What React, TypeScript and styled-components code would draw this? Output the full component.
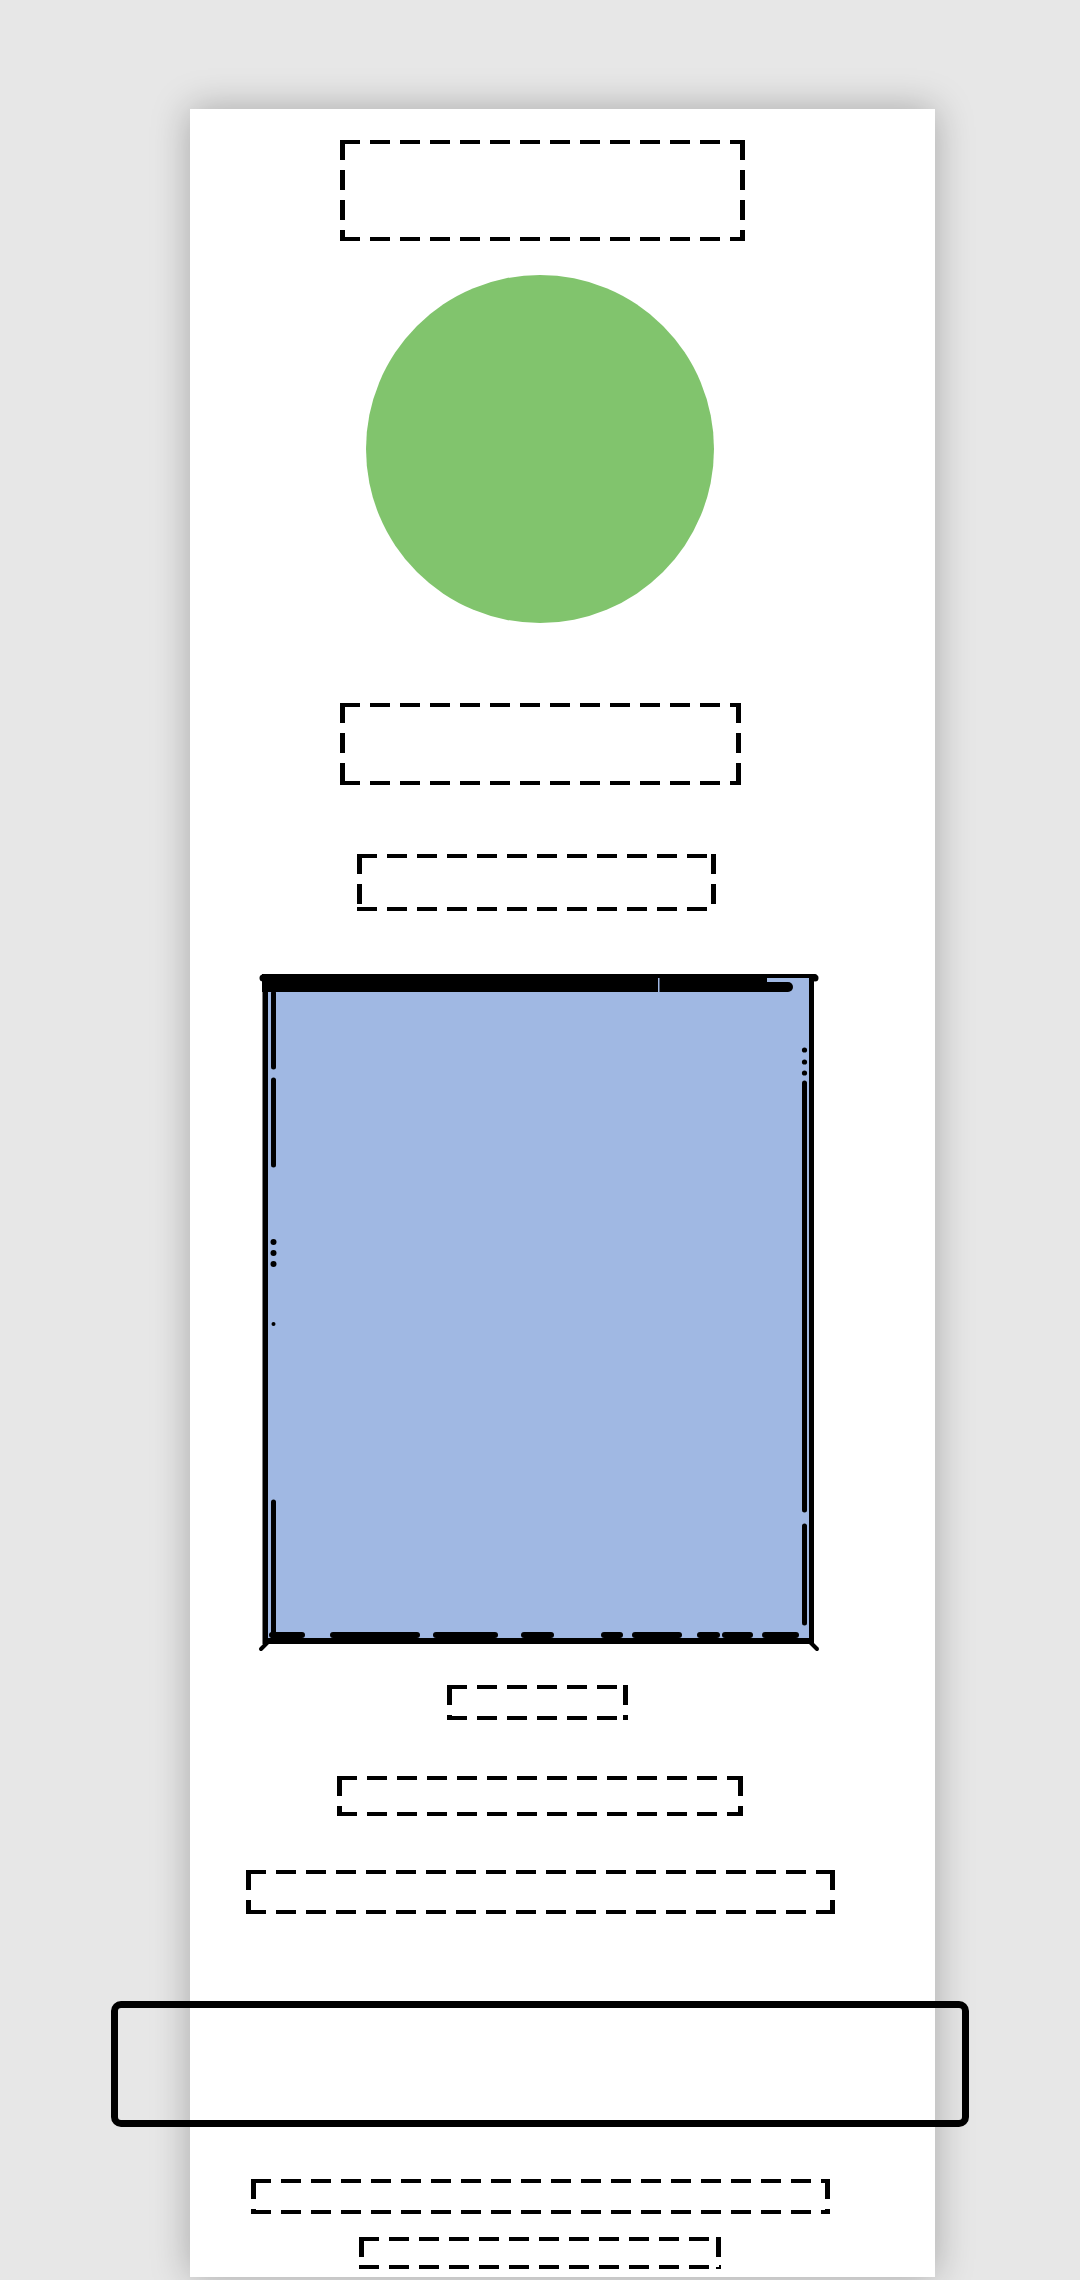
import React from 'react';
import styled, { createGlobalStyle } from 'styled-components';

const GlobalStyle = createGlobalStyle`
  html, body {
    margin: 0;
    padding: 0;
    background: #e7e7e7;
  }
  body {
    font-family: "Liberation Sans", Arial, sans-serif;
    overflow: hidden;
  }
`;

const Page = styled.div`
  box-sizing: border-box;
  min-height: 2280px;
  padding: 109px 0 0 190px;
`;

const Card = styled.main`
  box-sizing: border-box;
  width: 745px;
  height: 2168px;
  padding: 31px 45px 0 0;
  background: #ffffff;
  box-shadow: 0 0 36px rgba(0, 0, 0, 0.28);
  display: flex;
  flex-direction: column;
  align-items: center;
`;

const dash = (dir: string) =>
  `repeating-linear-gradient(${dir}, #000 0 20px, transparent 20px 30px)`;

const Placeholder = styled.div<{ $w: number; $h: number; $mt: number; $dx?: number }>`
  flex: none;
  box-sizing: border-box;
  width: ${(p) => p.$w}px;
  height: ${(p) => p.$h}px;
  margin-top: ${(p) => p.$mt}px;
  margin-left: ${(p) => (p.$dx && p.$dx > 0 ? p.$dx * 2 : 0)}px;
  margin-right: ${(p) => (p.$dx && p.$dx < 0 ? -p.$dx * 2 : 0)}px;
  background:
    ${dash('90deg')} left top / 100% 4px no-repeat,
    ${dash('90deg')} left bottom / 100% 4px no-repeat,
    ${dash('180deg')} left top / 5px 100% no-repeat,
    ${dash('180deg')} right top / 5px 100% no-repeat;
`;

const Avatar = styled.div<{ $size: number; $mt: number }>`
  flex: none;
  width: ${(p) => p.$size}px;
  height: ${(p) => p.$size}px;
  margin-top: ${(p) => p.$mt}px;
  border-radius: 50%;
  background: #81c46d;
`;

const Picture = styled.figure<{ $mt: number }>`
  flex: none;
  width: 566px;
  height: 682px;
  margin: ${(p) => p.$mt}px 0 0 0;
  display: block;
  svg {
    display: block;
  }
`;

const ActionButton = styled.button<{ $mt: number }>`
  flex: none;
  box-sizing: border-box;
  width: 858px;
  height: 126px;
  margin-top: ${(p) => p.$mt}px;
  padding: 0;
  border: 7px solid #000;
  border-radius: 10px;
  background: transparent;
`;

const leftInner: [number, number][] = [
  [23, 97],
  [110, 195],
  [532, 667],
];
const leftDots = [272, 283, 294];
const rightInner: [number, number][] = [
  [113, 540],
  [556, 653],
];
const rightDots = [80, 92, 103];
const bottomInner: [number, number][] = [
  [15, 45],
  [76, 160],
  [179, 238],
  [267, 294],
  [347, 363],
  [378, 422],
  [443, 460],
  [468, 493],
  [508, 539],
];

function FrameDrawing() {
  return (
    <svg width="566" height="682" viewBox="0 0 566 682">
      <rect x="8" y="5" width="548" height="669" fill="#a0b8e3" />
      <g fill="#000">
        <rect x="5" y="4" width="555" height="4" rx="2" />
        <rect x="5" y="4" width="505" height="18" />
        <rect x="500" y="12" width="36" height="10" rx="5" />
        <rect x="5.5" y="4" width="5.5" height="670" />
        <rect x="552" y="4" width="5" height="670" />
        <rect x="6" y="668" width="551" height="6" />
        <circle cx="6" cy="8" r="3.5" />
        <circle cx="558" cy="8" r="3.5" />
        <circle cx="16.5" cy="354" r="2" />
        {leftDots.map((y) => (
          <circle key={'ld' + y} cx="16.5" cy={y} r="3" />
        ))}
        {rightDots.map((y) => (
          <circle key={'rd' + y} cx="547.5" cy={y} r="2.6" />
        ))}
      </g>
      <rect x="401" y="8" width="1.5" height="14" fill="#a0b8e3" />
      <g stroke="#000" strokeLinecap="round" fill="none">
        {leftInner.map(([a, b]) => (
          <line key={'l' + a} x1="16.5" y1={a} x2="16.5" y2={b} strokeWidth="5" />
        ))}
        {rightInner.map(([a, b]) => (
          <line key={'r' + a} x1="547.5" y1={a} x2="547.5" y2={b} strokeWidth="5" />
        ))}
        {bottomInner.map(([a, b]) => (
          <line key={'b' + a} x1={a} y1="665" x2={b} y2="665" strokeWidth="6" />
        ))}
        <path d="M12 671 L4 679" strokeWidth="4" />
        <path d="M552 671 L560 679" strokeWidth="4" />
      </g>
    </svg>
  );
}

export default function App() {
  return (
    <>
      <GlobalStyle />
      <Page>
        <Card>
          <Placeholder $w={405} $h={101} $mt={0} $dx={2.5} />
          <Avatar $size={348} $mt={34} />
          <Placeholder $w={401} $h={82} $mt={80} />
          <Placeholder $w={359} $h={57} $mt={69} $dx={-3.5} />
          <Picture $mt={59}>
            <FrameDrawing />
          </Picture>
          <Placeholder $w={181} $h={35} $mt={33} $dx={-2.5} />
          <Placeholder $w={406} $h={40} $mt={56} />
          <Placeholder $w={589} $h={44} $mt={54} />
          <ActionButton $mt={87} aria-label="action" />
          <Placeholder $w={579} $h={35} $mt={52} />
          <Placeholder $w={362} $h={32} $mt={23} />
        </Card>
      </Page>
    </>
  );
}
